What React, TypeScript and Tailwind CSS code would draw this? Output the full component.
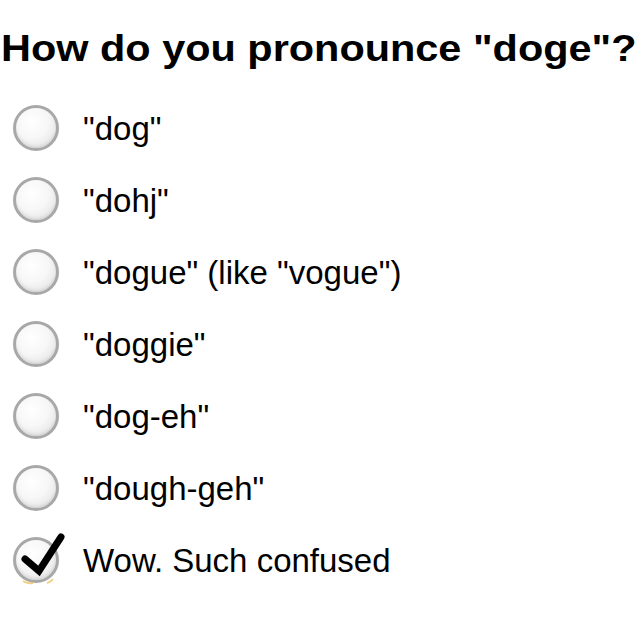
import React from "react";

const options = [
  '"dog"',
  '"dohj"',
  '"dogue" (like "vogue")',
  '"doggie"',
  '"dog-eh"',
  '"dough-geh"',
  "Wow. Such confused",
];

function Radio({ checked }: { checked: boolean }) {
  return (
    <div className="relative w-[46px] h-[46px] shrink-0">
      <div className="absolute inset-0 rounded-full border-[3px] border-[#a8a8a8] bg-[radial-gradient(circle_at_40%_35%,#ffffff_0%,#f7f7f7_45%,#dcdcdc_100%)] shadow-[inset_0_-2px_3px_rgba(0,0,0,0.08)]" />
      {checked && (
        <svg
          className="absolute left-0 top-0 overflow-visible"
          width="46"
          height="46"
          viewBox="0 0 46 46"
        >
          <path d="M10 44 Q14 47 20 46" stroke="#f0b84a" strokeWidth="2" fill="none" opacity="0.7" />
          <path d="M40 42 Q38 45 34 46" stroke="#f0b84a" strokeWidth="2" fill="none" opacity="0.7" />
          <path
            d="M12 22 L26 34 L48 0"
            stroke="#000"
            strokeWidth="7"
            fill="none"
            strokeLinecap="round"
            strokeLinejoin="miter"
          />
        </svg>
      )}
    </div>
  );
}

export default function App() {
  return (
    <div
      className="w-[640px] h-[640px] bg-white text-black overflow-hidden"
      style={{ fontFamily: '"Liberation Sans", Arial, sans-serif' }}
    >
      <h1 className="mt-[30px] pl-[1px] text-[37px] leading-[37px] font-bold whitespace-nowrap">
        <span className="inline-block origin-left scale-x-[1.12]">How do you pronounce "doge"?</span>
      </h1>
      <div className="mt-[25px] flex flex-col">
        {options.map((o, i) => (
          <div key={i} className="h-[72px] flex items-center pl-[13px] gap-[24px]">
            <Radio checked={i === options.length - 1} />
            <span className="text-[33px] leading-[33px] whitespace-nowrap">{o}</span>
          </div>
        ))}
      </div>
    </div>
  );
}
